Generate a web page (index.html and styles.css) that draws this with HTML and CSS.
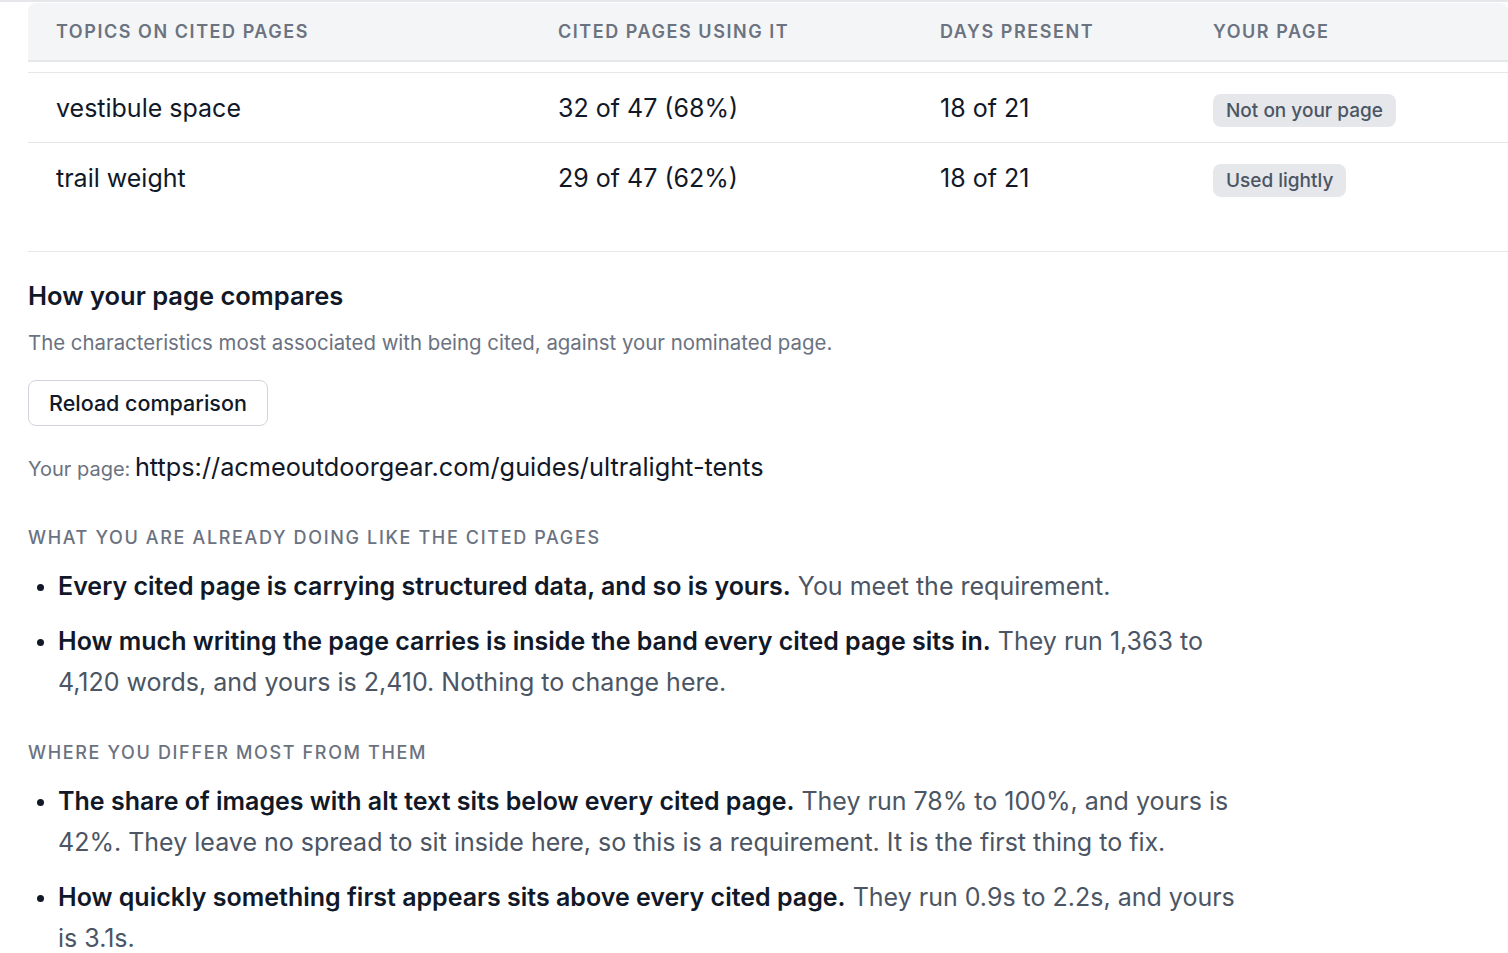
FILE: index.html
```html
<!DOCTYPE html>
<html>
<head>
<meta charset="utf-8">
<link rel="stylesheet" href="styles.css">
</head>
<body>
<div class="frame">
  <div class="table">
    <div class="thead">
      <div class="th">Topics on cited pages</div>
      <div class="th">Cited pages using it</div>
      <div class="th">Days present</div>
      <div class="th">Your page</div>
    </div>
    <div class="tbody">
      <div class="tr">
        <div class="td">vestibule space</div>
        <div class="td">32 of 47 (68%)</div>
        <div class="td">18 of 21</div>
        <div class="td"><span class="badge">Not on your page</span></div>
      </div>
      <div class="tr">
        <div class="td">trail weight</div>
        <div class="td">29 of 47 (62%)</div>
        <div class="td">18 of 21</div>
        <div class="td"><span class="badge">Used lightly</span></div>
      </div>
    </div>
  </div>

  <section class="compare">
    <h2 class="title">How your page compares</h2>
    <p class="subtitle">The characteristics most associated with being cited, against your nominated page.</p>
    <button class="btn">Reload comparison</button>
    <p class="yourpage"><span class="label">Your page:</span> <span class="url">https://acmeoutdoorgear.com/guides/ultralight-tents</span></p>

    <h3 class="section-label">What you are already doing like the cited pages</h3>
    <ul class="points">
      <li><strong>Every cited page is carrying structured data, and so is yours.</strong> You meet the requirement.</li>
      <li><strong>How much writing the page carries is inside the band every cited page sits in.</strong> They run 1,363 to 4,120 words, and yours is 2,410. Nothing to change here.</li>
    </ul>

    <h3 class="section-label second">Where you differ most from them</h3>
    <ul class="points">
      <li><strong>The share of images with alt text sits below every cited page.</strong> They run 78% to 100%, and yours is 42%. They leave no spread to sit inside here, so this is a requirement. It is the first thing to fix.</li>
      <li><strong>How quickly something first appears sits above every cited page.</strong> They run 0.9s to 2.2s, and yours is 3.1s.</li>
    </ul>
  </section>
</div>
</body>
</html>
```

FILE: styles.css
```css
html, body {
  margin: 0;
  padding: 0;
  background: #ffffff;
}

body {
  font-family: "Inter", "Open Sans", sans-serif;
  color: #111827;
  border-top: 2px solid #e5e7eb;
  overflow: hidden;
}

.frame {
  padding-left: 28px;
}

.table {
  border-bottom: 1px solid #e5e7eb;
  padding-bottom: 39px;
}

.thead,
.tr {
  display: grid;
  grid-template-columns: 502px 382px 273px 1fr;
  align-items: center;
}

.thead {
  height: 57px;
  background: #f4f5f7;
  border-top-left-radius: 8px;
  border-top-right-radius: 8px;
  border-bottom: 2px solid #e5e7eb;
  margin-top: 1px;
}

.th {
  padding-left: 28px;
  font-size: 18px;
  font-weight: 600;
  letter-spacing: 1.55px;
  text-transform: uppercase;
  color: #6b7280;
}

.tbody {
  margin-top: 10px;
}

.tr {
  height: 69px;
  border-top: 1px solid #e5e7eb;
}

.td {
  padding-left: 28px;
  font-size: 25px;
  color: #111827;
}

.badge {
  display: inline-block;
  background: #e5e7eb;
  color: #4b5563;
  font-size: 19px;
  font-weight: 500;
  line-height: 33px;
  padding: 0 13px;
  border-radius: 8px;
  position: relative;
  top: 2px;
}

.compare {
  padding-top: 27px;
}

.title {
  margin: 0;
  font-size: 25.5px;
  font-weight: 600;
  line-height: 34px;
  color: #111827;
}

.subtitle {
  margin: 16px 0 0;
  font-size: 20.4px;
  line-height: 28px;
  color: #6b7280;
}

.btn {
  margin-top: 23px;
  height: 46px;
  padding: 0 20px;
  background: #ffffff;
  border: 1.5px solid #d1d5db;
  border-radius: 8px;
  font-family: inherit;
  font-size: 21.5px;
  font-weight: 500;
  color: #111827;
}

.yourpage {
  margin: 24px 0 0;
  line-height: 34px;
}

.yourpage .label {
  font-size: 20px;
  color: #6b7280;
}

.yourpage .url {
  font-size: 25.3px;
  color: #111827;
}

.section-label {
  margin: 39px 0 0;
  font-size: 18px;
  font-weight: 500;
  letter-spacing: 1.65px;
  text-transform: uppercase;
  color: #6b7280;
  line-height: 24px;
}

.section-label.second {
  margin-top: 38px;
}

.points {
  margin: 16px 0 0;
  padding-left: 30px;
  max-width: 1200px;
}

.points li {
  font-size: 25px;
  line-height: 41px;
  color: #4b5563;
  margin-bottom: 14px;
}

.points li::marker {
  color: #111827;
  font-size: 22px;
}

.points strong {
  font-weight: 600;
  color: #111827;
}
```
